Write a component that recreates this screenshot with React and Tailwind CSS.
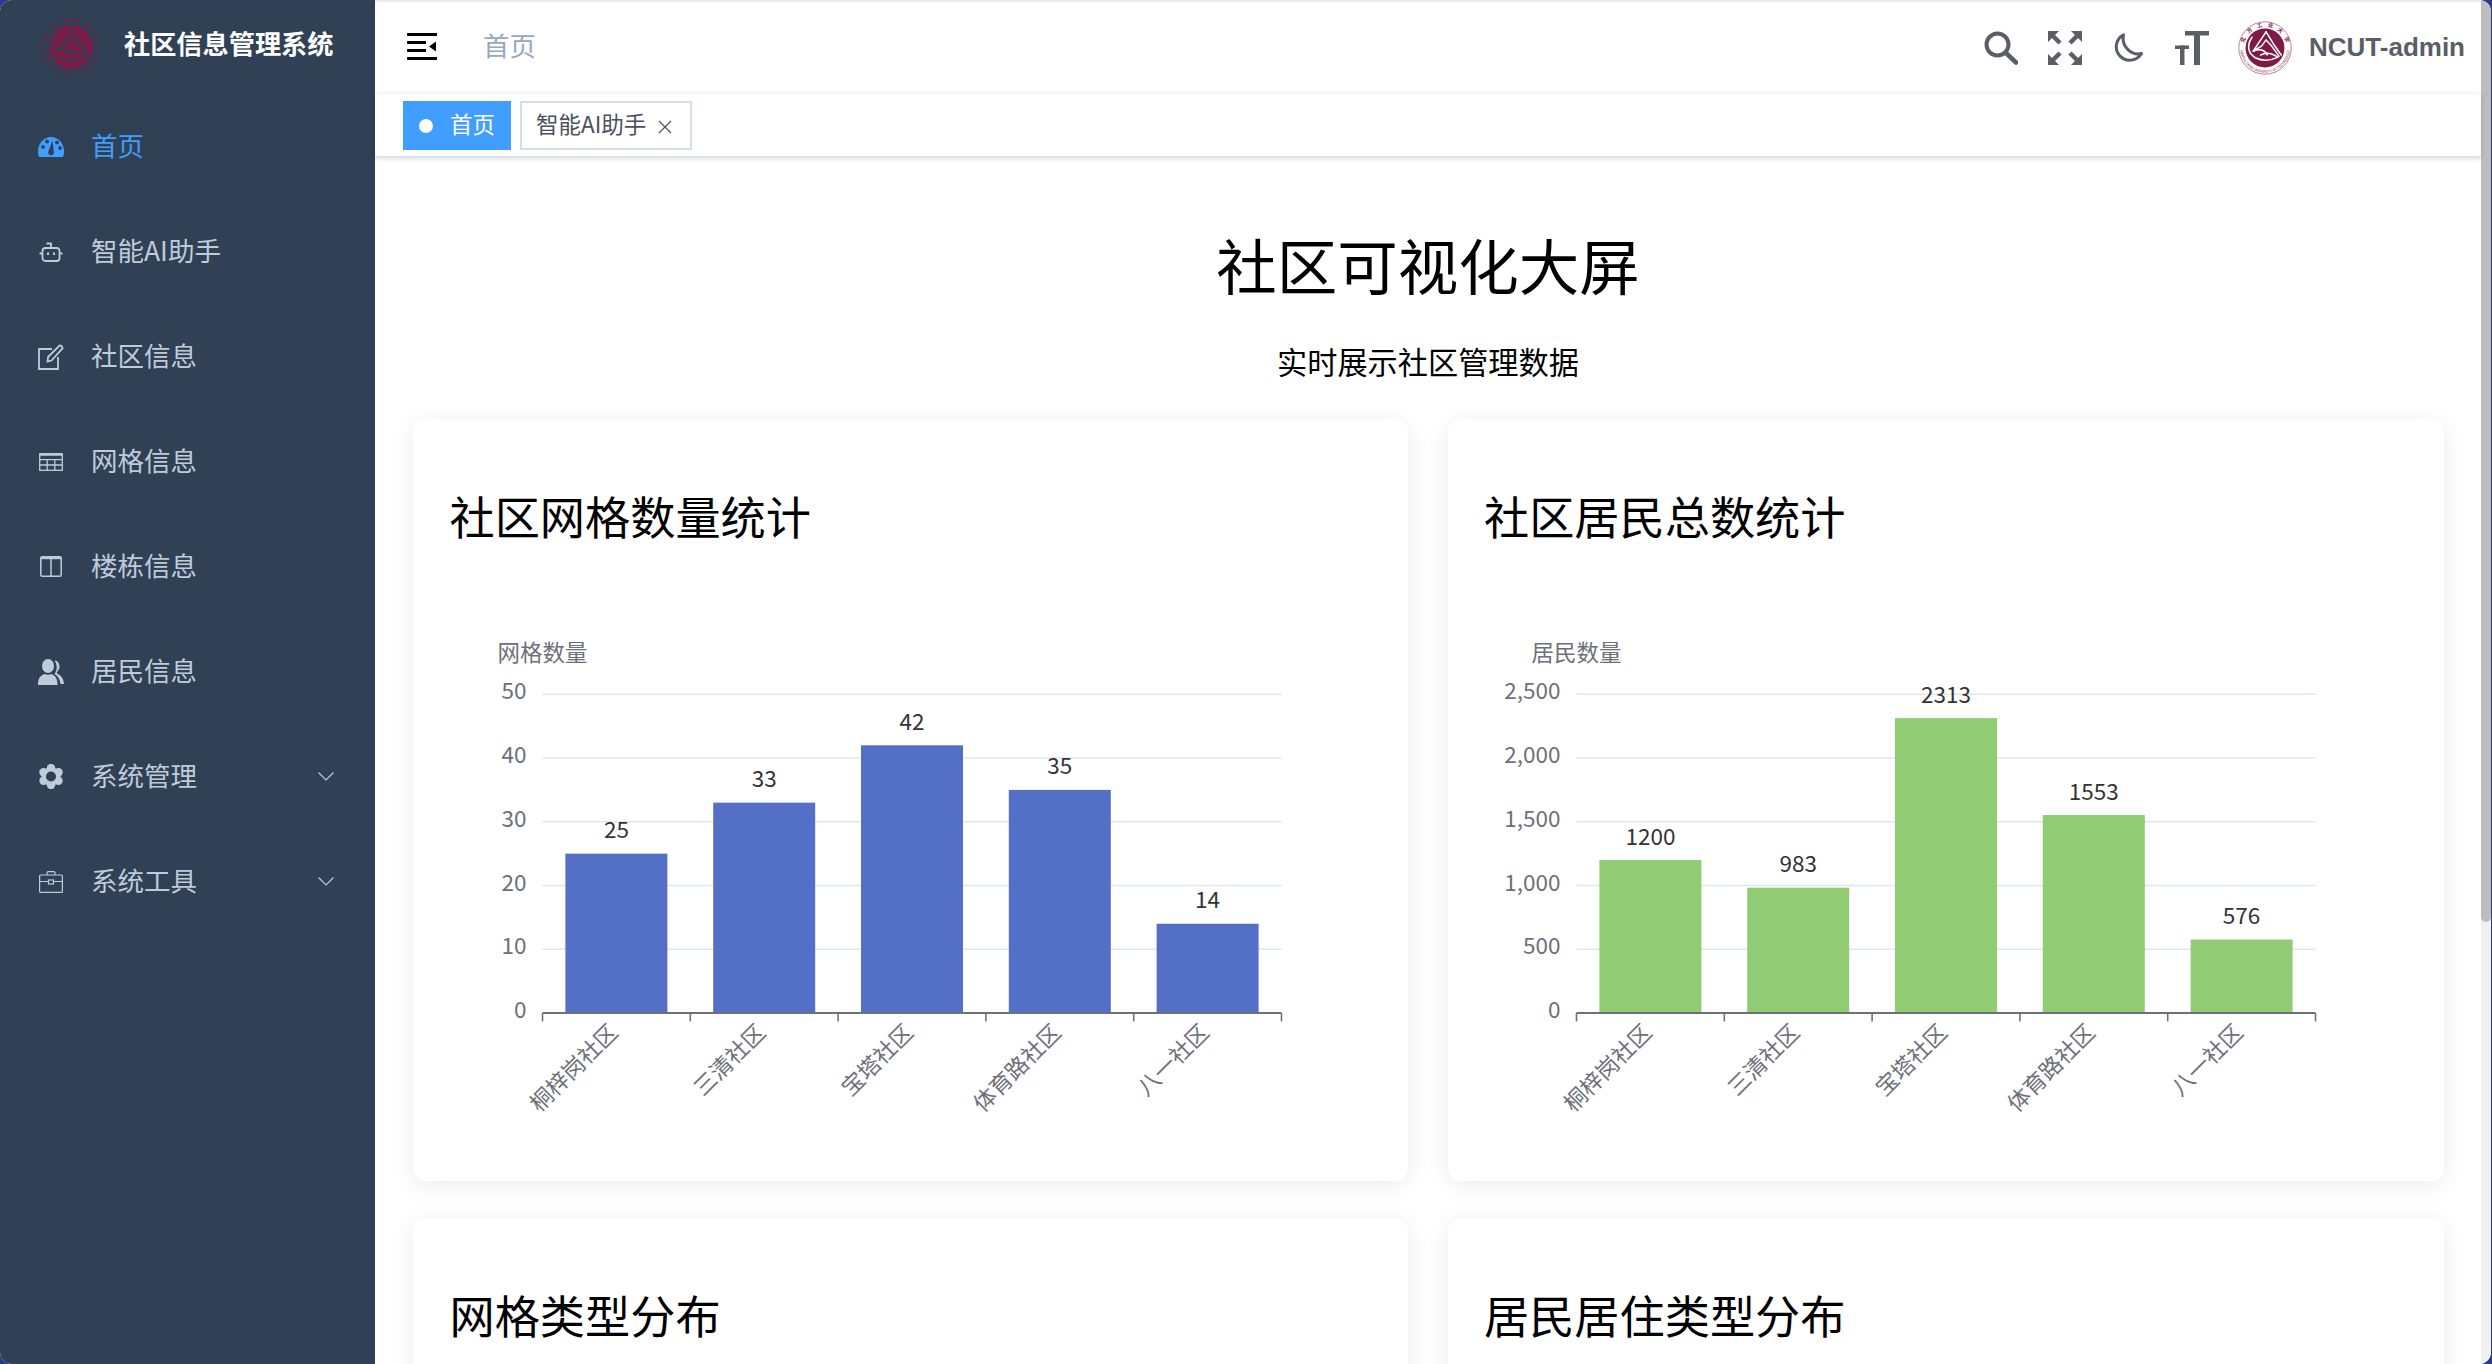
import React from 'react';

const SIDE = '#304156';
const TEXT = '#bfcbd9';

const DashboardIcon = () => (
  <svg width="26" height="20" viewBox="0 0 26 20">
    <path d="M1 20C0.3 18 0 16.5 0 14.5C0 6.5 5.8 0 13 0s13 6.500 13 14.500c0 2-.3 3.500-1 5.500z" fill="#409eff" />
    <circle cx="5" cy="10" r="1.900" fill={SIDE} />
    <circle cx="9" cy="4.500" r="1.900" fill={SIDE} />
    <circle cx="19" cy="5.500" r="1.900" fill={SIDE} />
    <circle cx="22" cy="11" r="1.900" fill={SIDE} />
    <path d="M14.500 3.500L15.800 14.500a2.900 2.900 0 1 1-5.600 .2z" fill={SIDE} />
  </svg>
);

const RobotIcon = () => (
  <svg width="24" height="20" viewBox="0 0 24 20" fill="none" stroke={TEXT} strokeWidth="1.800">
    <rect x="3.500" y="6" width="17" height="13" rx="3" />
    <path d="M12 6V1.500H7.500M3.500 11.500H.5M20.500 11.500h3" />
    <path d="M9 10.500v2.500M15 10.500v2.500" strokeWidth="2" />
  </svg>
);

const EditIcon = () => (
  <svg width="26" height="26" viewBox="0 0 26 26" fill="none" stroke={TEXT} strokeWidth="1.800">
    <path d="M14 5H1v20h19V13" />
    <path d="M9.500 17.500l.6-4.500L21.500 1.500c1.500-.4 3 1.100 3 2.800L13.500 16.500z" />
  </svg>
);

const TableIcon = () => (
  <svg width="24" height="18" viewBox="0 0 24 18" fill="none" stroke={TEXT} strokeWidth="1.300">
    <rect x=".7" y=".7" width="22.600" height="16.600" />
    <path d="M.7 1.500h22.600" strokeWidth="2.500" />
    <path d="M.7 6.700h22.600M.7 12h22.600M8.200 6v11.300M15.800 6v11.300" />
  </svg>
);

const ColumnsIcon = () => (
  <svg width="22" height="21" viewBox="0 0 22 21" fill="none" stroke={TEXT} strokeWidth="1.500">
    <rect x=".8" y=".8" width="20.400" height="19.400" rx="1.500" />
    <path d="M.8 2h20.400" strokeWidth="2.400" />
    <path d="M11 1v19" />
  </svg>
);

const PeoplesIcon = () => (
  <svg width="26" height="26" viewBox="0 0 26 26" fill={TEXT}>
    <ellipse cx="10" cy="7" rx="6" ry="7" />
    <path d="M0 26c0-3.500.4-6 2-8c2-2.200 4-2.800 4.500-3c2 1 5 1 7 0c1.200 .6 3 1.500 4.200 3.200c1.300 2 1.800 4.500 1.800 7.800z" />
    <path d="M16.500 1.500c3.500 0 5 3 5 6c0 2.500-1.200 4.500-2.500 5.500c-.5 .9 0 1.600 1.800 2.500c3 1.500 4.700 4.500 5.200 9.500h-3.500c-.5-4.500-2.500-8-6-10c1.500-2 2.200-4 2.200-6.500c0-2.800-.8-5-2.200-7z" />
  </svg>
);

const GearIcon = () => (
  <svg width="26" height="25" viewBox="0 0 26 25">
    <circle cx="13" cy="12.500" r="9.500" fill={TEXT} />
    {[[13, 4], [20.500, 8.200], [20.500, 16.800], [13, 21], [5.500, 16.800], [5.500, 8.200]].map(([x, y]) => (
      <circle key={x + '-' + y} cx={x} cy={y} r="4.200" fill={TEXT} />
    ))}
    <circle cx="13" cy="12.500" r="5" fill={SIDE} />
  </svg>
);

const CaseIcon = () => (
  <svg width="24" height="22" viewBox="0 0 24 22" fill="none" stroke={TEXT} strokeWidth="1.200">
    <rect x=".6" y="4" width="22.800" height="17.400" rx="1" />
    <path d="M8 4V2c0-.8 .6-1.400 1.400-1.400h5.200c.8 0 1.400 .6 1.400 1.400v2" />
    <path d="M.6 10.500h8.900M14.500 10.500h8.900" />
    <rect x="9.500" y="9" width="5" height="4" />
  </svg>
);

const Chevron = () => (
  <svg width="16" height="9" viewBox="0 0 16 9" fill="none" stroke={TEXT} strokeWidth="1.200">
    <path d="M.5 .5L8 8L15.500 .5" />
  </svg>
);

const Hamburger = () => (
  <svg width="30" height="27" viewBox="0 0 30 27" fill="#000" className="mb-[4px]">
    <rect x="0" y="0" width="30" height="3" />
    <rect x="0" y="8" width="19" height="3" />
    <rect x="0" y="16" width="19" height="3" />
    <rect x="0" y="24" width="30" height="3" />
    <path d="M22 13.500L29 8.500V18.500z" />
  </svg>
);

const GRAY = '#5a5e66';

const SearchIcon = () => (
  <svg width="34" height="34" viewBox="0 0 34 34" fill="none" stroke={GRAY} strokeWidth="4" strokeLinecap="round">
    <circle cx="13.500" cy="13.500" r="11" />
    <path d="M22 22L32 31.500" strokeWidth="4.500" />
  </svg>
);

const FullscreenIcon = () => (
  <svg width="34" height="34" viewBox="0 0 34 34" fill={GRAY}>
    <path d="M0 0h11L0 11z" />
    <path d="M34 0H23l11 11z" />
    <path d="M0 34h11L0 23z" />
    <path d="M34 34H23l11-11z" />
    <path d="M5 5L12 12M29 5L22 12M5 29L12 22M29 29L22 22" stroke={GRAY} strokeWidth="4.500" />
  </svg>
);

const MoonIcon = () => (
  <svg width="30" height="30" viewBox="0 0 30 30" fill="none" stroke={GRAY} strokeWidth="3" strokeLinejoin="round">
    <path d="M10.500 1.800A13.500 13.500 0 1 0 28.500 20.500C19 23 8 14 10.500 1.800z" />
  </svg>
);

const FontSizeIcon = () => (
  <svg width="34" height="34" viewBox="0 0 34 34" fill={GRAY}>
    <rect x="10" y="0" width="24" height="4.500" />
    <rect x="19" y="0" width="6" height="34" />
    <rect x="0" y="14.500" width="14" height="3.500" />
    <rect x="5" y="14.500" width="4.500" height="19.500" />
  </svg>
);

// school emblem, the white parts of the png are see-through so cut follows the background
const Emblem = ({ size, cut, id, dim }) => (
  <svg width={size} height={size} viewBox="0 0 100 100" className="shrink-0">
    <defs>
      <path id={id + '-top'} d="M10.500 50A39.500 39.500 0 0 1 89.500 50" />
      <path id={id + '-bot'} d="M4 50A46 46 0 0 0 96 50" />
    </defs>
    <circle cx="50" cy="50" r="48.500" fill="none" stroke="#7f1a46" strokeWidth="1" opacity={dim ? 0.7 : 1} />
    <text fontSize="10" fill="#7f1a46" fontWeight="700" opacity={dim ? 0.8 : 1}>
      <textPath href={'#' + id + '-top'} startOffset="50%" textAnchor="middle" textLength="105">北方工业大学</textPath>
    </text>
    <text fontSize="6.500" fill="#7f1a46" opacity={dim ? 0.8 : 1}>
      <textPath href={'#' + id + '-bot'} startOffset="50%" textAnchor="middle" textLength="135">NORTH CHINA UNIVERSITY OF TECHNOLOGY</textPath>
    </text>
    <circle cx="50" cy="50" r="36" fill="#7f1a46" />
    <g fill="none" stroke={cut} strokeWidth="2.800" strokeLinejoin="round" strokeLinecap="round">
      <path d="M52 20L28 56L44 46L52 35L62 46L76 65" />
      <path d="M52 20L66 43L80 63" />
      <path d="M26 30C16 44 18 60 32 68C44 74 60 74 74 67" />
      <path d="M28 56C40 50 50 54 54 63" />
      <path d="M42 63C52 57 62 59 74 67" />
    </g>
  </svg>
);

const menu = [
  { name: '首页', icon: DashboardIcon, active: true },
  { name: '智能AI助手', icon: RobotIcon },
  { name: '社区信息', icon: EditIcon },
  { name: '网格信息', icon: TableIcon },
  { name: '楼栋信息', icon: ColumnsIcon },
  { name: '居民信息', icon: PeoplesIcon },
  { name: '系统管理', icon: GearIcon, more: true },
  { name: '系统工具', icon: CaseIcon, more: true },
];

const names = ['桐梓岗社区', '三清社区', '宝塔社区', '体育路社区', '八一社区'];

const BarChart = ({ title, data, max, ticks, color, left }) => {
  const band = 147.800;
  const bottom = 463;
  const h = 318.700;
  return (
    <svg width="921" height="610" viewBox="0 0 921 610" className="block">
      <text x={left} y={101} textAnchor="middle" dominantBaseline="central" fontSize="22.500" fill="#6e7079">{title}</text>
      {ticks.map((t, i) => {
        const y = bottom - (h * i) / (ticks.length - 1);
        return (
          <g key={t}>
            {i > 0 && <line x1={left} x2={left + band * 5} y1={y} y2={y} stroke="#e0e6f1" strokeWidth="1.600" />}
            <text x={left - 16} y={y - 5} textAnchor="end" dominantBaseline="central" fontSize="22.500" fill="#6e7079">{t}</text>
          </g>
        );
      })}
      {data.map((v, i) => {
        const cx = left + band * (i + 0.5);
        const bh = (v / max) * h;
        return (
          <g key={names[i]}>
            <rect x={cx - 51} y={bottom - bh} width="102" height={bh} fill={color} />
            <text x={cx} y={bottom - bh - 25.500} textAnchor="middle" dominantBaseline="central" fontSize="22.500" fill="#333">{v}</text>
            <text
              x={cx - 12}
              y={bottom + 6}
              textAnchor="end"
              dominantBaseline="hanging"
              fontSize="22.500"
              fill="#6e7079"
              transform={`rotate(-45 ${cx - 12} ${bottom + 6})`}
            >
              {names[i]}
            </text>
          </g>
        );
      })}
      <line x1={left} x2={left + band * 5} y1={bottom} y2={bottom} stroke="#6e7079" strokeWidth="1.800" />
      {[0, 1, 2, 3, 4, 5].map((i) => (
        <line key={i} x1={left + band * i} x2={left + band * i} y1={bottom} y2={bottom + 8.500} stroke="#6e7079" strokeWidth="1.600" />
      ))}
    </svg>
  );
};

const Card = ({ title, children }) => (
  <div className="h-[762px] rounded-[13px] bg-white pl-[36.500px] pr-[37px] pt-[67px] shadow-[0_4px_24px_rgba(0,0,0,0.08)]">
    <h3 className="mb-[4px] h-[60px] text-[45.200px] leading-[60px] font-normal text-black">{title}</h3>
    {children}
  </div>
);

export default function App() {
  return (
    <div className="h-screen w-full overflow-hidden bg-[#2a3a8c] pr-px font-['Noto_Sans_CJK_SC','Liberation_Sans',sans-serif]">
      <div className="flex h-full overflow-hidden rounded-[12px] bg-white">
        {/* Sidebar */}
        <aside className="w-[375px] shrink-0 bg-[#304156]">
          <div className="flex h-[94px] items-center pl-[41px]">
            <Emblem size={60} cut={SIDE} id="side" dim />
            <h1 className="mb-[6px] ml-[23px] text-[26.200px] font-bold text-white">社区信息管理系统</h1>
          </div>
          <nav>
            {menu.map((item) => {
              const Icon = item.icon;
              return (
                <div key={item.name} className="flex h-[105px] items-center pr-[41px]">
                  <div className="flex w-[91px] justify-center pl-[11px]">
                    <Icon />
                  </div>
                  <span className={`mb-[4px] text-[26.500px] ${item.active ? 'text-[#409eff]' : 'text-[#bfcbd9]'}`}>{item.name}</span>
                  {item.more && (
                    <span className="ml-auto flex">
                      <Chevron />
                    </span>
                  )}
                </div>
              );
            })}
          </nav>
        </aside>

        {/* Main */}
        <div className="flex min-w-0 flex-1 flex-col">
          <header className="flex h-[94px] shrink-0 items-center border-t-2 border-[#ecedf3] bg-white pl-[32px] pr-[16px]">
            <Hamburger />
            <span className="mb-[6px] ml-[46px] text-[26.500px] text-[#97a8be]">首页</span>
            <div className="ml-auto flex items-center">
              <SearchIcon />
              <span className="ml-[30px] flex"><FullscreenIcon /></span>
              <span className="ml-[31px] flex"><MoonIcon /></span>
              <span className="ml-[32px] flex"><FontSizeIcon /></span>
              <span className="ml-[29px] flex"><Emblem size={54} cut="#fff" id="head" /></span>
              <span className="mb-[2px] ml-[17px] font-['Liberation_Sans',sans-serif] text-[26px] font-bold text-[#5a5e66]">NCUT-admin</span>
            </div>
          </header>

          <div className="relative z-10 flex h-[63px] shrink-0 items-start gap-[9px] border-b border-[#d8dce5] bg-white pl-[28px] pt-[7px] shadow-[0_2px_5px_rgba(0,0,0,0.12),0_-1px_5px_rgba(0,0,0,0.05)]">
            <div className="flex h-[49px] w-[108px] items-center bg-[#409eff] pl-[16px] text-[22.500px] text-white">
              <span className="h-[14px] w-[14px] rounded-full bg-white" />
              <span className="mb-[3px] ml-[17px]">首页</span>
            </div>
            <div className="flex h-[49px] w-[172px] items-center border-2 border-[#d8dce5] bg-white pl-[14px] text-[22.500px] text-[#495060]">
              <span className="mb-[3px]">智能AI助手</span>
              <svg width="14" height="14" viewBox="0 0 14 14" className="ml-[12px] mt-[3px]" fill="none" stroke="#495060" strokeWidth="1.200">
                <path d="M1 1L13 13M13 1L1 13" />
              </svg>
            </div>
          </div>

          <main className="flex-1 overflow-hidden bg-white pl-[38px]">
            <h2 className="mt-[67px] h-[80px] pr-[38px] text-center text-[60.500px] leading-[80px] font-normal text-black">社区可视化大屏</h2>
            <p className="mt-[36.500px] h-[40px] pr-[38px] text-center text-[30.200px] leading-[40px] text-black">实时展示社区管理数据</p>
            <div className="mt-[38.500px] grid grid-cols-[995px_996.500px] gap-x-[39.500px] gap-y-[37px]">
              <Card title="社区网格数量统计">
                <BarChart title="网格数量" data={[25, 33, 42, 35, 14]} max={50} ticks={['0', '10', '20', '30', '40', '50']} color="#5470c6" left={92.500} />
              </Card>
              <Card title="社区居民总数统计">
                <BarChart title="居民数量" data={[1200, 983, 2313, 1553, 576]} max={2500} ticks={['0', '500', '1,000', '1,500', '2,000', '2,500']} color="#91cc75" left={92.500} />
              </Card>
              <Card title="网格类型分布" />
              <Card title="居民居住类型分布" />
            </div>
          </main>
        </div>

        {/* Page scrollbar */}
        <div className="w-[10px] shrink-0 bg-[#f0f0f0]">
          <div className="h-[922px] rounded-b-[6px] bg-[#bdbdbd]" />
        </div>
      </div>
    </div>
  );
}
